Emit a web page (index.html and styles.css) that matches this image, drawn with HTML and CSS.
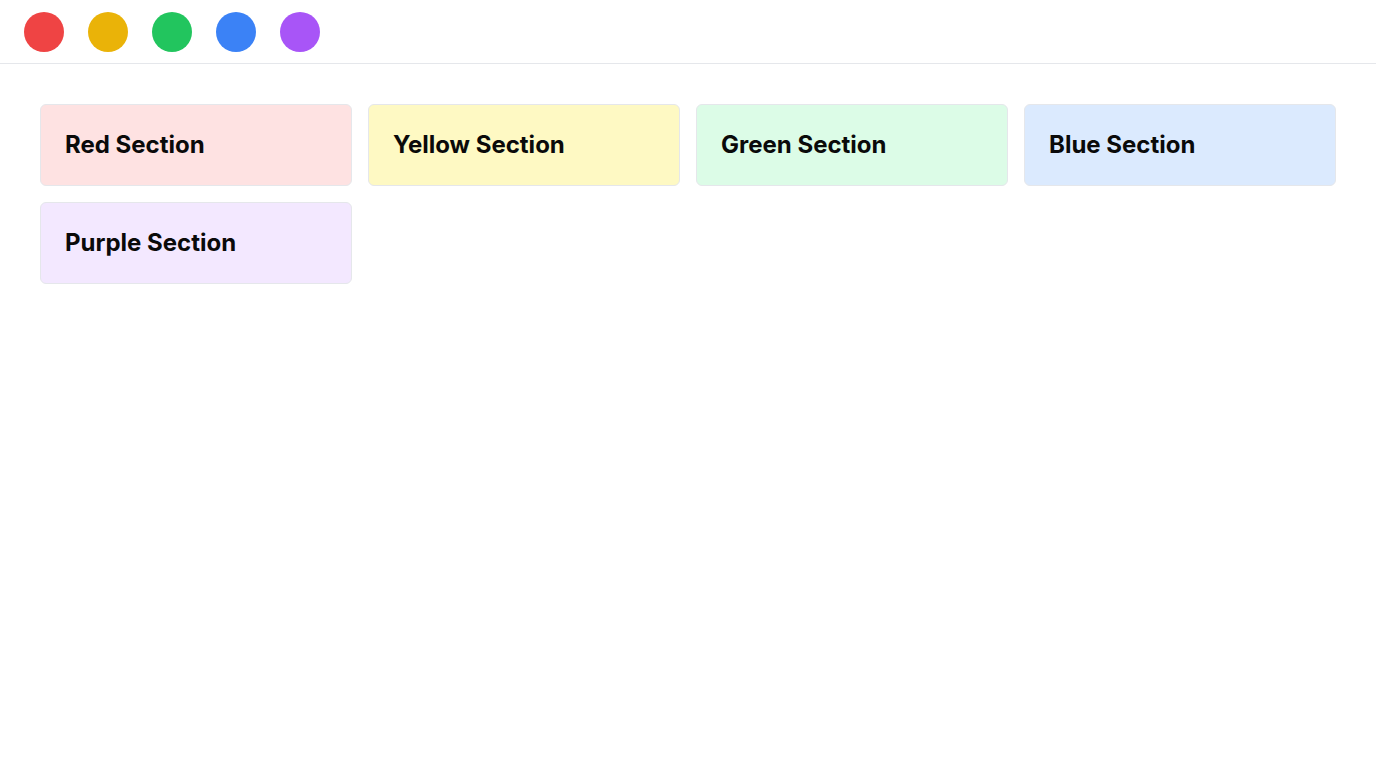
FILE: index.html
```html
<!DOCTYPE html>
<html lang="en">
<head>
<meta charset="utf-8">
<title>Sections</title>
<link rel="stylesheet" href="styles.css">
</head>
<body>
<header class="topbar">
  <span class="dot dot-red"></span>
  <span class="dot dot-yellow"></span>
  <span class="dot dot-green"></span>
  <span class="dot dot-blue"></span>
  <span class="dot dot-purple"></span>
</header>
<main class="grid">
  <section class="card card-red"><h2>Red Section</h2></section>
  <section class="card card-yellow"><h2>Yellow Section</h2></section>
  <section class="card card-green"><h2>Green Section</h2></section>
  <section class="card card-blue"><h2>Blue Section</h2></section>
  <section class="card card-purple"><h2>Purple Section</h2></section>
</main>
</body>
</html>
```
FILE: styles.css
```css
* { box-sizing: border-box; }
body {
  margin: 0;
  background: #ffffff;
  font-family: Inter, "Noto Sans", sans-serif;
  color: #0a0a0a;
}
.topbar {
  display: flex;
  gap: 24px;
  padding: 12px 24px 11px;
  border-bottom: 1px solid #e5e7eb;
}
.dot {
  width: 40px;
  height: 40px;
  border-radius: 50%;
  display: block;
}
.dot-red { background: #ef4444; }
.dot-yellow { background: #eab308; }
.dot-green { background: #22c55e; }
.dot-blue { background: #3b82f6; }
.dot-purple { background: #a855f7; }
.grid {
  display: grid;
  grid-template-columns: repeat(4, 1fr);
  gap: 16px;
  padding: 40px;
}
.card {
  border: 1px solid #e5e7eb;
  border-radius: 6px;
  padding: 24px;
}
.card h2 {
  margin: 0;
  font-size: 24px;
  line-height: 32px;
  font-weight: 700;
}
.card-red { background: #fee2e2; }
.card-yellow { background: #fef9c3; }
.card-green { background: #dcfce7; }
.card-blue { background: #dbeafe; }
.card-purple { background: #f3e8ff; }
```
